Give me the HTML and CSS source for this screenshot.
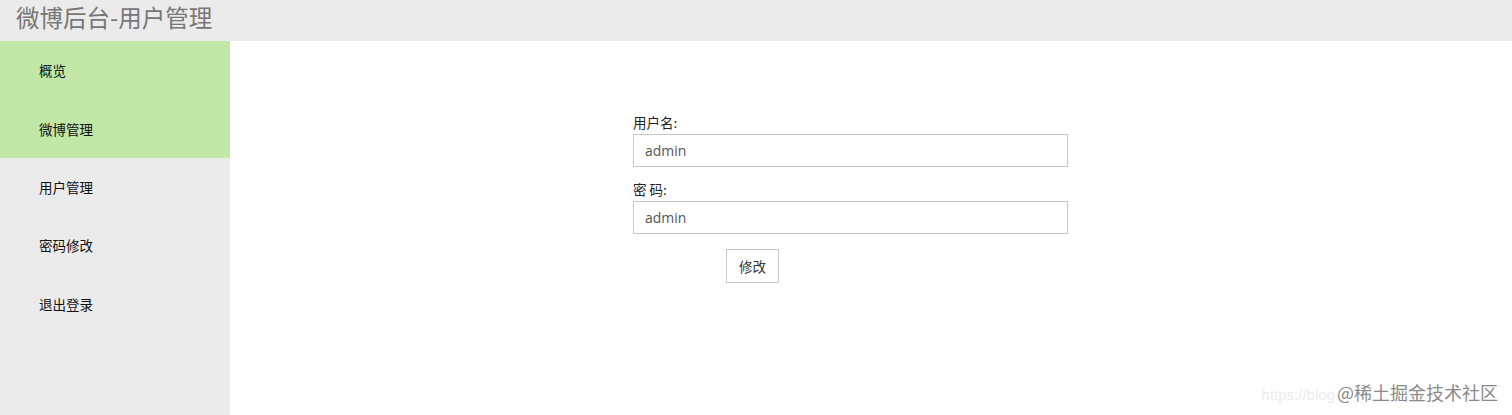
FILE: index.html
```html
<!DOCTYPE html>
<html lang="zh">
<head>
<meta charset="utf-8">
<title>微博后台-用户管理</title>
<link rel="stylesheet" href="styles.css">
</head>
<body>
<header class="topbar"><h1 class="title">微博后台-用户管理</h1></header>
<div class="layout">
  <nav class="sidebar">
    <a class="nav-item active">概览</a>
    <a class="nav-item active">微博管理</a>
    <a class="nav-item">用户管理</a>
    <a class="nav-item">密码修改</a>
    <a class="nav-item">退出登录</a>
  </nav>
  <main class="main">
    <form class="form">
      <label class="label">用户名:</label>
      <input class="input" type="text" value="admin">
      <label class="label label-gap">密 码:</label>
      <input class="input" type="text" value="admin">
      <div class="actions"><button type="button" class="btn">修改</button></div>
    </form>
    <div class="watermark"><span class="wm-url">https://blog</span><span class="wm-main">@稀土掘金技术社区</span></div>
  </main>
</div>
</body>
</html>
```
FILE: styles.css
```css
* { box-sizing: border-box; }
html, body { margin: 0; padding: 0; height: 100%; }
body {
  font-family: "Open Sans", "Noto Sans CJK SC", sans-serif;
  background: #fff;
  color: #222;
  width: 1512px;
  height: 415px;
  overflow: hidden;
  display: flex;
  flex-direction: column;
}
.topbar {
  height: 41px;
  background: #ebebeb;
  display: flex;
  align-items: center;
  padding-left: 16px;
  flex: none;
}
.title {
  margin: 0;
  font-size: 23.5px;
  font-weight: 400;
  color: #777;
  font-family: "Noto Sans CJK SC", sans-serif;
  position: relative;
  top: -4px;
}
.layout { flex: 1; display: flex; }
.sidebar {
  width: 230px;
  background: #ebebeb;
  display: flex;
  flex-direction: column;
  flex: none;
}
.nav-item {
  height: 58.4px;
  display: flex;
  align-items: center;
  padding-left: 39px;
  font-size: 13.5px;
  color: #111;
  font-family: "Noto Sans CJK SC", sans-serif;
}
.nav-item.active { background: #c2e8a8; }
.main { flex: 1; position: relative; padding: 72px 0 0 403px; }
.form { width: 435px; display: flex; flex-direction: column; }
.label {
  font-size: 13.5px;
  color: #222;
  line-height: 18px;
  margin-bottom: 3px;
  font-family: "Noto Sans CJK SC", sans-serif;
}
.label-gap { margin-top: 13px; }
.input {
  height: 33px;
  width: 435px;
  border: 1px solid #c8c8c8;
  padding: 0 11px;
  font-family: "Open Sans", sans-serif;
  font-size: 14px;
  color: #555;
  outline: none;
  margin: 0;
}
.actions { padding: 15px 0 0 93px; }
.btn {
  width: 53px;
  height: 34px;
  background: #fff;
  border: 1px solid #c8c8c8;
  font-size: 13.5px;
  color: #333;
  font-family: "Noto Sans CJK SC", sans-serif;
  padding: 0;
}
.watermark {
  position: absolute;
  right: 14px;
  bottom: 10px;
  display: flex;
  align-items: baseline;
  white-space: nowrap;
  font-family: "Noto Sans CJK SC", sans-serif;
}
.wm-url {
  font-size: 15px;
  color: #ececec;
  font-family: "Liberation Sans", sans-serif;
  margin-right: 2px;
}
.wm-main {
  font-size: 18px;
  color: #8a8a8a;
}
```
